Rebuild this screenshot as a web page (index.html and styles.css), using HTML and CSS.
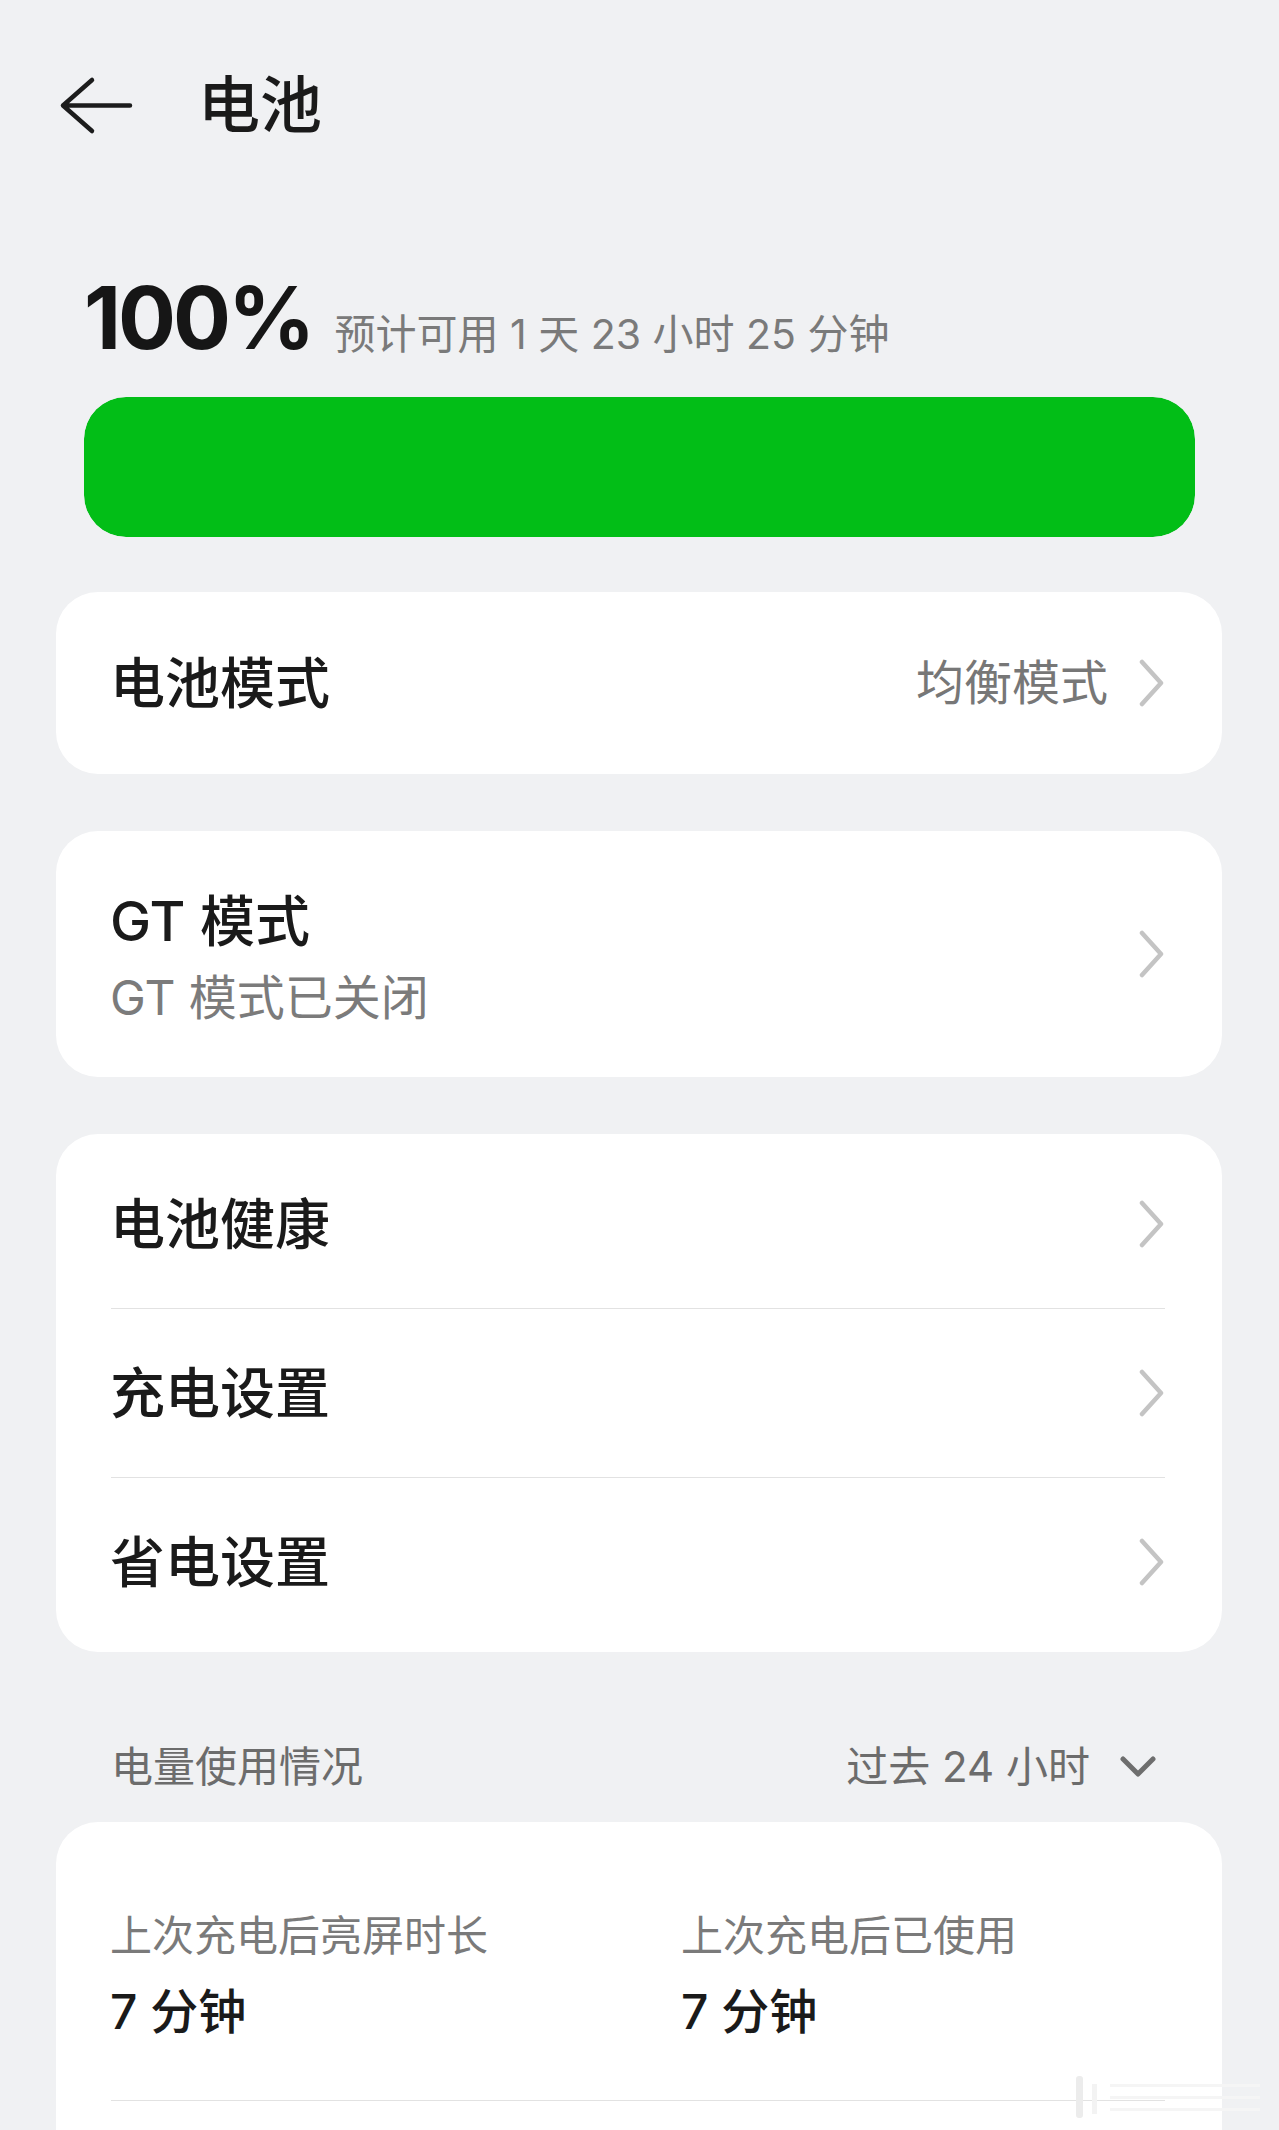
FILE: index.html
```html
<!DOCTYPE html>
<html lang="zh-CN">
<head>
<meta charset="utf-8">
<title>电池</title>
<link rel="stylesheet" href="styles.css">
</head>
<body>
<div class="page">
  <header class="header">
    <svg class="back" width="78" height="60" viewBox="0 0 78 60" aria-hidden="true">
      <path d="M34 4 L5 29.5 L34 55 M5 29.5 H72" fill="none" stroke="#1c1c1c" stroke-width="4.5" stroke-linecap="round" stroke-linejoin="round"/>
    </svg>
    <h1 class="title">电池</h1>
  </header>

  <section class="battery">
    <div class="level-row">
      <span class="level">100%</span>
      <span class="estimate">预计可用 1 天 23 小时 25 分钟</span>
    </div>
    <div class="bar"><div class="bar-fill" style="width:100%"></div></div>
  </section>

  <div class="card card-single">
    <div class="row">
      <span class="row-title">电池模式</span>
      <span class="row-value">均衡模式</span>
      <svg class="chev" width="26" height="48" viewBox="0 0 26 48" aria-hidden="true"><path d="M3 3 L22 24 L3 45" fill="none" stroke="#c4c4c4" stroke-width="4.5" stroke-linecap="round" stroke-linejoin="round"/></svg>
    </div>
  </div>

  <div class="card card-gt">
    <div class="row-gt">
      <div class="gt-text">
        <div class="row-title gt-title">GT 模式</div>
        <div class="gt-sub">GT 模式已关闭</div>
      </div>
      <svg class="chev chev-gt" width="26" height="48" viewBox="0 0 26 48" aria-hidden="true"><path d="M3 3 L22 24 L3 45" fill="none" stroke="#c4c4c4" stroke-width="4.5" stroke-linecap="round" stroke-linejoin="round"/></svg>
    </div>
  </div>

  <div class="card card-list">
    <div class="row">
      <span class="row-title">电池健康</span>
      <svg class="chev" width="26" height="48" viewBox="0 0 26 48" aria-hidden="true"><path d="M3 3 L22 24 L3 45" fill="none" stroke="#c4c4c4" stroke-width="4.5" stroke-linecap="round" stroke-linejoin="round"/></svg>
    </div>
    <div class="divider"></div>
    <div class="row">
      <span class="row-title">充电设置</span>
      <svg class="chev" width="26" height="48" viewBox="0 0 26 48" aria-hidden="true"><path d="M3 3 L22 24 L3 45" fill="none" stroke="#c4c4c4" stroke-width="4.5" stroke-linecap="round" stroke-linejoin="round"/></svg>
    </div>
    <div class="divider"></div>
    <div class="row">
      <span class="row-title">省电设置</span>
      <svg class="chev" width="26" height="48" viewBox="0 0 26 48" aria-hidden="true"><path d="M3 3 L22 24 L3 45" fill="none" stroke="#c4c4c4" stroke-width="4.5" stroke-linecap="round" stroke-linejoin="round"/></svg>
    </div>
  </div>

  <div class="section-head">
    <span class="section-title">电量使用情况</span>
    <span class="section-range">过去 24 小时</span>
    <svg class="down" width="36" height="22" viewBox="0 0 36 22" aria-hidden="true"><path d="M3 3 L18 18 L33 3" fill="none" stroke="#6e6e6e" stroke-width="5" stroke-linecap="round" stroke-linejoin="round"/></svg>
  </div>

  <div class="card card-usage">
    <div class="usage-grid">
      <div class="usage-item">
        <div class="usage-label">上次充电后亮屏时长</div>
        <div class="usage-value">7 分钟</div>
      </div>
      <div class="usage-item">
        <div class="usage-label">上次充电后已使用</div>
        <div class="usage-value">7 分钟</div>
      </div>
    </div>
    <div class="divider usage-divider"></div>
    <div class="usage-more"></div>
  </div>

  <div class="watermark" aria-hidden="true">
    <svg width="200" height="46" viewBox="0 0 200 46">
      <rect x="6" y="2" width="7" height="42" rx="3" fill="#ececec"/>
      <rect x="22" y="10" width="5" height="30" fill="#f3f3f3"/>
      <rect x="40" y="10" width="150" height="3" fill="#f5f5f5"/>
      <rect x="40" y="22" width="150" height="3" fill="#f5f5f5"/>
      <rect x="40" y="34" width="150" height="3" fill="#f5f5f5"/>
    </svg>
  </div>
</div>
</body>
</html>
```

FILE: styles.css
```css
* { box-sizing: border-box; }

html, body {
  margin: 0;
  padding: 0;
  background: #f0f1f3;
}

body {
  font-family: "Inter", "Noto Sans CJK SC", "Noto Sans", sans-serif;
  color: #1a1a1a;
}

.page {
  position: relative;
  width: 1279px;
  min-height: 2130px;
  overflow: hidden;
}

.header {
  display: flex;
  align-items: center;
  height: 112px;
  margin-top: 50px;
  padding-left: 58px;
}

.back { display: block; flex: none; }

.title {
  margin: 0 0 0 62px;
  font-size: 62px;
  line-height: 1;
  font-weight: 500;
  color: #1a1a1a;
}

.battery {
  padding: 0 84px;
  margin-top: 113px;
}

.level-row {
  display: flex;
  align-items: baseline;
  gap: 22px;
}

.level {
  font-family: "Inter", sans-serif;
  font-size: 86px;
  line-height: 1;
  font-weight: 700;
  letter-spacing: -3px;
  color: #161616;
}

.estimate {
  font-size: 41px;
  line-height: 1;
  color: #7a7a7a;
}

.bar {
  margin-top: 36px;
  height: 140px;
  border-radius: 42px;
  overflow: hidden;
  background: #dfe3e6;
}

.bar-fill {
  height: 100%;
  background: #02be17;
  border-radius: 42px;
}

.card {
  background: #ffffff;
  border-radius: 42px;
  margin: 0 57px 0 56px;
}

.card-single {
  margin-top: 55px;
  padding: 7px 57px 7px 54px;
}

.row {
  display: flex;
  align-items: center;
  height: 168px;
}

.row-title {
  font-size: 55px;
  line-height: 66px;
  font-weight: 500;
  color: #1a1a1a;
  flex: 1;
}

.row-value {
  font-size: 48px;
  line-height: 60px;
  color: #777777;
  margin-right: 31px;
}

.chev { display: block; flex: none; }

.card-gt {
  margin-top: 57px;
  padding: 57px 57px 49px 54px;
}

.row-gt {
  display: flex;
  align-items: center;
}

.gt-text {
  flex: 1;
  display: flex;
  flex-direction: column;
  gap: 14px;
}

.gt-title { flex: none; }

.gt-sub {
  font-size: 48px;
  line-height: 60px;
  color: #7b7b7b;
}

.chev-gt { margin-top: -8px; }

.card-list {
  margin-top: 57px;
  padding: 6px 57px 6px 54px;
}

.divider {
  height: 1px;
  background: #e2e2e2;
  margin-left: 1px;
}

.section-head {
  display: flex;
  align-items: center;
  height: 60px;
  margin-top: 85px;
  padding: 0 123px 0 111px;
}

.section-title {
  flex: 1;
  font-size: 42px;
  line-height: 60px;
  color: #6c6c6c;
}

.section-range {
  font-size: 42px;
  line-height: 60px;
  color: #6c6c6c;
  margin-right: 30px;
}

.down { display: block; flex: none; }

.card-usage {
  margin-top: 25px;
  padding: 86px 57px 0 54px;
}

.usage-grid {
  display: grid;
  grid-template-columns: 571px 1fr;
}

.usage-item {
  display: flex;
  flex-direction: column;
  gap: 18px;
}

.usage-label {
  font-size: 42px;
  line-height: 56px;
  color: #7a7a7a;
}

.usage-value {
  font-size: 48px;
  line-height: 60px;
  font-weight: 500;
  color: #1a1a1a;
}

.usage-divider { margin-top: 58px; }

.usage-more { height: 160px; }

.watermark {
  position: absolute;
  left: 1070px;
  top: 2074px;
}

.watermark svg { display: block; }
```
